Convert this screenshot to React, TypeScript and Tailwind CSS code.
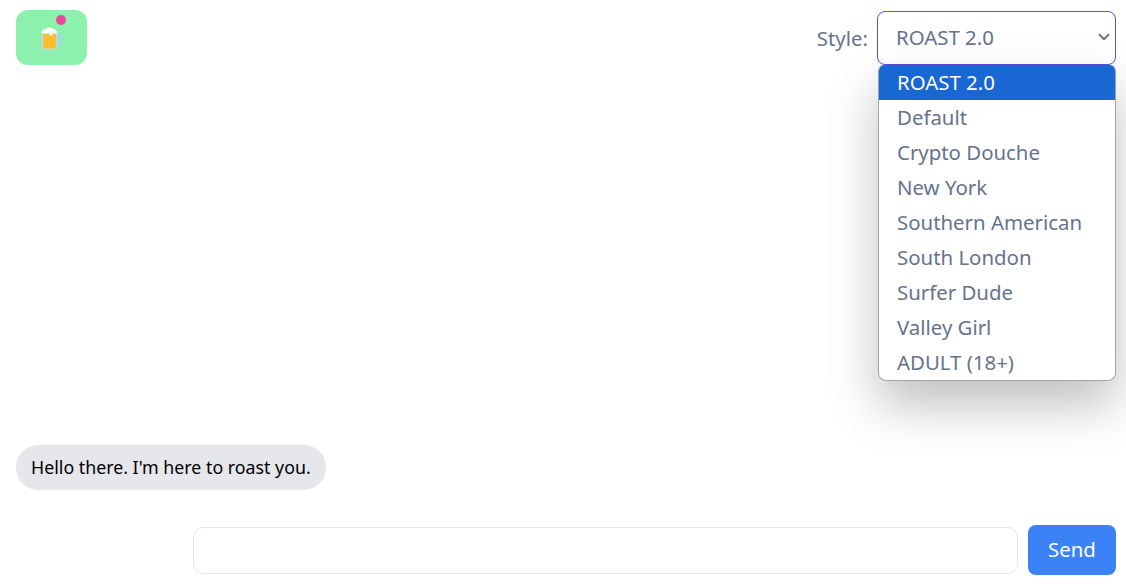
import { ChevronDown } from "lucide-react";

const styles = [
  "ROAST 2.0",
  "Default",
  "Crypto Douche",
  "New York",
  "Southern American",
  "South London",
  "Surfer Dude",
  "Valley Girl",
  "ADULT (18+)",
];

function BeerIcon() {
  return (
    <svg width="24" height="24" viewBox="0 0 24 24" className="block">
      <path d="M16 9h3.5a1.5 1.5 0 0 1 1.500 1.500v6a1.500 1.500 0 0 1-1.500 1.500H16" fill="none" stroke="#a5d2f5" strokeWidth="2" />
      <rect x="1.500" y="4" width="16" height="20" rx="2" fill="#b4dcf5" />
      <rect x="3" y="8" width="13" height="14.500" fill="#fbc02d" />
      <path d="M7 13v8M11 11v10" stroke="#f7b32b" strokeWidth="1" />
      <path d="M1.500 7c0-3 2.500-4 4-4 1-2 6-2 7.500 0 2 0 4 1.500 4 4-1 1-3 .5-4-.5-.5 1-.5 3-2 3s-1.500-2-2-3c-1 1-6 1.500-7.500 .5z" fill="#fdfbf5" />
    </svg>
  );
}

function StylePicker() {
  return (
    <div className="flex items-center gap-[9px]">
      <label className="text-[20.4px] text-[#64748b]">Style:</label>
      <div className="relative w-[239px]">
        <div className="flex h-[54px] items-center justify-between rounded-lg border border-[#5b50d6] bg-white pb-[2px] pl-[18px] pr-[2px] text-[20.4px] text-[#64748b]">
          <span>ROAST 2.0</span>
          <ChevronDown size={18} strokeWidth={2.5} className="text-[#64748b]" />
        </div>
        <ul className="absolute left-[1px] top-[54px] z-10 w-[238px] overflow-hidden rounded-b-lg rounded-t-md border border-t-0 border-[#a3a3a3] bg-white shadow-[0_24px_50px_rgba(0,0,0,0.25)]">
          {styles.map((name, i) => (
            <li
              key={name}
              className={
                i === 0
                  ? "flex h-[35px] items-center bg-[#1967d2] pl-[18px] text-[20.4px] text-white"
                  : "flex h-[35px] items-center pl-[18px] text-[20.4px] text-[#64748b]"
              }
            >
              {name}
            </li>
          ))}
        </ul>
      </div>
    </div>
  );
}

export default function App() {
  return (
    <div className="flex h-[587px] flex-col bg-white pl-4 pr-[10px] font-['Noto_Sans','Open_Sans',sans-serif]">
      <header className="flex items-start justify-between pt-[10px]">
        <div className="relative flex h-[55px] w-[71px] items-center justify-center rounded-xl bg-[#8cf1ad]">
          <BeerIcon />
          <span className="absolute left-[40px] top-[5px] h-[10px] w-[10px] rounded-full bg-[#ec4899]" />
        </div>
        <div className="pt-px">
          <StylePicker />
        </div>
      </header>
      <main className="flex flex-1 flex-col items-start justify-end pb-[35px]">
        <div className="flex h-[45px] w-[310px] items-center rounded-[22px] bg-[#e5e7eb] px-[15px] text-[17.8px] whitespace-nowrap text-black">
          Hello there. I'm here to roast you.
        </div>
      </main>
      <footer className="flex items-center justify-end gap-[10px] pb-3">
        <input className="h-[47px] w-[825px] rounded-[10px] border border-[#e5e7eb] bg-white" />
        <button className="h-[50px] w-[88px] rounded-lg bg-[#3b82f6] pb-[2px] text-[20.4px] text-white">Send</button>
      </footer>
    </div>
  );
}
